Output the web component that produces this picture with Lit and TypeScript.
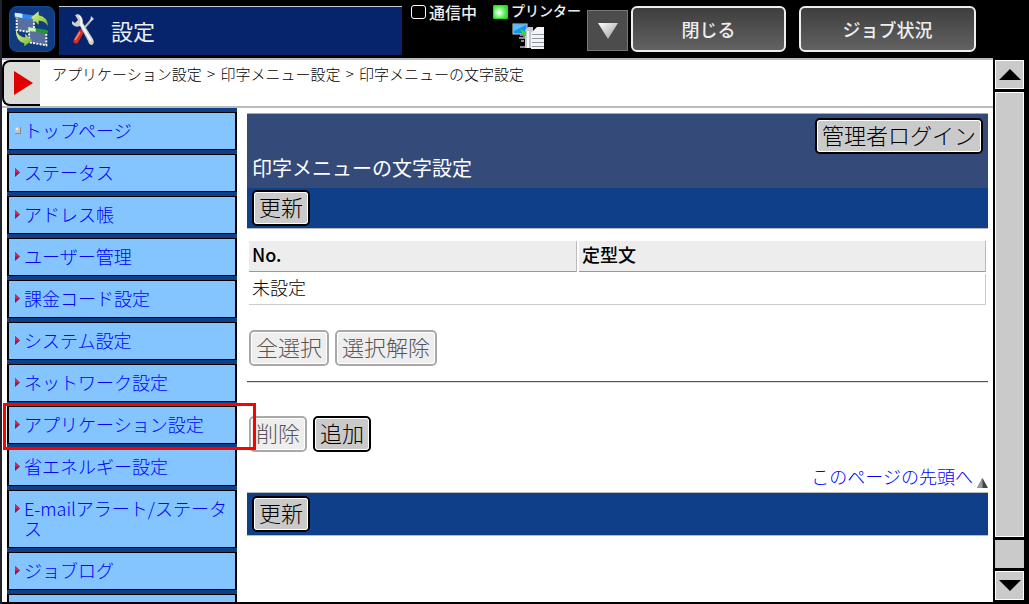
import { LitElement, html, css, svg, nothing } from "lit";
import { customElement, property } from "lit/decorators.js";

interface NavItem {
  label: string;
  top?: boolean;
  marked?: boolean;
}

const NAV: NavItem[] = [
  { label: "トップページ", top: true },
  { label: "ステータス" },
  { label: "アドレス帳" },
  { label: "ユーザー管理" },
  { label: "課金コード設定" },
  { label: "システム設定" },
  { label: "ネットワーク設定" },
  { label: "アプリケーション設定", marked: true },
  { label: "省エネルギー設定" },
  { label: "E-mailアラート/ステータス" },
  { label: "ジョブログ" },
  { label: "" },
];

@customElement("panel-header")
export class PanelHeader extends LitElement {
  static styles = css`
    :host {
      display: flex;
      height: 58px;
      box-sizing: border-box;
      padding: 6px 53px 0 7px;
      background: #000;
      color: #eee;
    }
    svg {
      display: block;
    }
    .app {
      flex: none;
      width: 46px;
      height: 46px;
      box-sizing: border-box;
      border: 1px solid #174a9a;
      border-radius: 8px;
      background: #123c80;
    }
    .title {
      flex: 0 1 344px;
      height: 49px;
      box-sizing: border-box;
      margin: 0 0 0 4px;
      padding: 0 0 2px 10px;
      display: flex;
      align-items: center;
      gap: 12px;
      border-top: 1px solid #c8ccd8;
      background: #05246c;
      font-size: 22px;
      font-weight: 400;
      line-height: 24px;
    }
    .status {
      flex: 1 0 169px;
      display: flex;
      gap: 16px;
      margin: -3px 6px 0 9px;
      font-weight: 500;
    }
    .job {
      display: flex;
      flex-direction: column;
      gap: 2px;
    }
    .line {
      display: flex;
      align-items: center;
      gap: 3px;
      height: 18px;
      font-size: 16px;
      line-height: 18px;
      white-space: nowrap;
    }
    .small {
      font-size: 14px;
      line-height: 14px;
    }
    .small span:last-child {
      padding-bottom: 4px;
    }
    .lamp {
      width: 15px;
      height: 14px;
      box-sizing: border-box;
      border: 1px solid #fff;
      border-radius: 3px;
    }
    .on {
      border-color: #2bd92b;
      border-radius: 1px;
      background: radial-gradient(circle at 40% 55%, #e8ffe0 10%, #4df04d 60%, #1fd01f);
    }
    .printer {
      margin-left: 19px;
    }
    button {
      font: inherit;
      color: inherit;
      padding: 0;
      box-sizing: border-box;
    }
    .drop {
      flex: none;
      width: 41px;
      height: 41px;
      margin: 4px 3px 0 0;
      display: grid;
      place-items: center;
      border: 1px solid #777;
      background: #4c4c4c;
    }
    .key {
      flex: 0 0 155px;
      height: 46px;
      border: 2px solid #eee;
      border-radius: 6px;
      background: linear-gradient(#3e3e3e, #626262);
      font-size: 18px;
      font-weight: 500;
      line-height: 24px;
    }
    .wide {
      flex-basis: 177px;
      margin-left: 13px;
    }
  `;

  render() {
    return html`
      <svg class="app" viewBox="0 0 46 46" aria-hidden="true">
        <defs>
          <linearGradient id="leaf" x1="0" y1="0" x2="1" y2="1">
            <stop offset="0" stop-color="#e3f79a" />
            <stop offset="1" stop-color="#6db52e" />
          </linearGradient>
        </defs>
        <path d="M7 8 L25 11 V27 L7 24Z" fill="#5a6f9f" stroke="#fff" stroke-width="2" stroke-dasharray="2 1.4" />
        <path d="M5 6 L26 9 V14 L5 11Z" fill="#2d86ec" />
        <path d="M5 6 L13 7 V11.500 L5 10Z" fill="#d5e9ff" />
        <path d="M20 23 L38 26 V40 L20 37Z" fill="#5a6f9f" stroke="#fff" stroke-width="2" stroke-dasharray="2 1.4" />
        <path d="M19 21 L39 24 V28 L19 25Z" fill="#27952d" />
        <path d="M19 21 L27 22.500 V26 L19 25Z" fill="#c8f0bc" />
        <path d="M22 11 L30 4.500 V8.500 Q39 10 40 20 Q36 14.500 30 14.500 V18.500Z" fill="url(#leaf)" />
        <path d="M6 23 Q9 32 16 32 V28 L23 35 L15 41 V38 Q6 36 6 23Z" fill="url(#leaf)" />
      </svg>
      <h1 class="title">
        <svg width="30" height="34" viewBox="0 0 30 34" aria-hidden="true">
          <path d="M23 6 L11 20" stroke="#b9bec4" stroke-width="2" />
          <path d="M22 3 L25 6 L21 9Z" fill="#d4d8dc" />
          <path d="M12 19 L7 28" stroke="#d22f22" stroke-width="5" stroke-linecap="round" />
          <path d="M11 19 L6 27" stroke="#f48a78" stroke-width="1.500" />
          <path d="M6 2 L9 1 Q14 3 14 10 L24 26 Q26 30 23 32 Q20 32 19 28 L11 13 Q6 15 3 11 L3 8 L6 10 L9 7Z" fill="#cfcfcf" />
          <path d="M10 3 Q13 5 12 11 L22 28" fill="none" stroke="#fff" stroke-width="1.500" />
        </svg>
        設定
      </h1>
      <div class="status" role="status">
        <div class="line"><span class="lamp"></span><span>通信中</span></div>
        <div class="job">
          <div class="line small"><span class="lamp on"></span><span>プリンター</span></div>
          <svg class="printer" width="34" height="27" viewBox="0 0 34 27" aria-hidden="true">
            <rect x="1" y="1" width="14" height="10" fill="#1593ea" stroke="#b9cfdf" />
            <path d="M2 2 H14 L2 8Z" fill="#5bbcf8" />
            <path d="M8 12 H12 V15 H7 M12 18 H9 M13 24 H8" stroke="#888" fill="none" stroke-width="2" />
            <path d="M13 25 V7 L16 4 H21 V25Z" fill="#c3c9ce" />
            <path d="M15 25 V8 H17 V25Z" fill="#f4f6f7" />
            <path d="M19 26 V10 L25 4 H32 V26Z" fill="#f2f4f5" />
            <path d="M20 11.500 H32 M20 15.500 H32 M20 19.500 H32 M20 23.500 H32" stroke="#8d969c" />
            <path d="M9 7 L13 11 V8" stroke="#2ee02e" fill="none" stroke-width="2" />
          </svg>
        </div>
      </div>
      <button class="drop" aria-label="表示切替">
        <svg width="20" height="16" viewBox="0 0 20 16">
          <defs>
            <linearGradient id="tri" x1="0" y1="0" x2="1" y2="1">
              <stop offset="0" stop-color="#fff" />
              <stop offset="1" stop-color="#999" />
            </linearGradient>
          </defs>
          <path d="M0 0 H20 L10 16Z" fill="url(#tri)" />
        </svg>
      </button>
      <button class="key">閉じる</button>
      <button class="key wide">ジョブ状況</button>
    `;
  }
}

@customElement("side-nav")
export class SideNav extends LitElement {
  @property({ attribute: false }) items: NavItem[] = [];

  static styles = css`
    :host {
      display: block;
      background: #103f8a;
    }
    ul {
      list-style: none;
      margin: 0;
      padding: 4px 0 0;
      display: flex;
      flex-direction: column;
      gap: 4px;
    }
    li {
      position: relative;
      min-height: 38px;
      box-sizing: border-box;
      border: 1px solid #000;
      border-width: 1px 2px;
      background: #84c5ff;
    }
    a {
      display: flex;
      gap: 3px;
      padding: 7px 6px 9px;
      color: #00f;
      font-size: 18px;
      line-height: 20px;
      text-decoration: none;
      word-break: break-all;
    }
    svg {
      flex: none;
      width: 6px;
      height: 20px;
    }
    .mark {
      position: absolute;
      inset: -4px -21px -7px -6px;
      border: 3px solid #f00;
      z-index: 2;
      pointer-events: none;
    }
  `;

  render() {
    return html`<nav>
      <ul>
        ${this.items.map(
          (item) => html`<li>
            ${item.label
              ? html`<a href="#">
                  <svg viewBox="0 0 6 20" aria-hidden="true">
                    ${item.top
                      ? svg`<path d="M0 7H6V14H0Z" fill="#8a8a8a"/><path d="M0 7H5V13H0Z" fill="#c9c4bc"/><path d="M1 8H3V10H1Z" fill="#eee"/>`
                      : svg`<path d="M0 6L5 10.500L0 15Z" fill="#8c1c4c"/><path d="M0 6L5 10.500H0Z" fill="#e8204c"/>`}
                  </svg>
                  <span>${item.label}</span>
                </a>`
              : nothing}
            ${item.marked ? html`<div class="mark"></div>` : nothing}
          </li>`
        )}
      </ul>
    </nav>`;
  }
}

@customElement("scroll-rail")
export class ScrollRail extends LitElement {
  static styles = css`
    :host {
      display: flex;
      flex-direction: column;
      gap: 3px;
      padding: 2px 5px 4px 2px;
      background: #000;
    }
    button,
    .track,
    .thumb {
      box-sizing: border-box;
      padding: 0;
      border: 1px solid #fff;
      background: #cacaca;
    }
    button {
      flex: none;
      height: 29px;
      display: grid;
      place-items: center;
    }
    .track {
      flex: 1;
    }
    .thumb {
      flex: none;
      height: 28px;
      border: 0;
    }
  `;

  render() {
    return html`
      <button aria-label="上へ">
        <svg width="22" height="11" viewBox="0 0 22 11"><path d="M0 11L11 0L22 11Z" /></svg>
      </button>
      <div class="track"></div>
      <div class="thumb"></div>
      <button aria-label="下へ">
        <svg width="22" height="11" viewBox="0 0 22 11"><path d="M0 0L11 11L22 0Z" /></svg>
      </button>
    `;
  }
}

@customElement("app-root")
export class AppRoot extends LitElement {
  static styles = css`
    :host {
      display: flex;
      flex-direction: column;
      height: 100vh;
      box-sizing: border-box;
      overflow: hidden;
      border-left: 2px solid #20202e;
      background: #000;
      color: #000;
      font-family: "Noto Sans CJK JP", sans-serif;
      font-weight: 300;
    }
    .body {
      flex: 1;
      min-height: 0;
      display: grid;
      grid-template-columns: 1fr 36px;
    }
    .page {
      min-height: 0;
      display: flex;
      flex-direction: column;
      margin-bottom: 2px;
      overflow: hidden;
      background: #fff;
    }
    .crumbs {
      flex: none;
      display: flex;
      gap: 12px;
      height: 46px;
      border: 2px solid #bbb;
      border-width: 2px 0;
      font-size: 15px;
      line-height: 28px;
    }
    .sep {
      margin: 0 2px;
    }
    .tab {
      width: 38px;
      box-sizing: border-box;
      display: grid;
      place-items: center;
      padding: 0 0 0 2px;
      border: 2px solid #000;
      border-right: 0;
      border-radius: 8px 0 0 8px;
      background: #dcdcd8;
    }
    .columns {
      flex: 1;
      min-height: 0;
      display: grid;
      grid-template-columns: 230px 1fr;
      gap: 10px;
      padding: 0 5px;
    }
    main {
      padding-top: 5px;
    }
    .head {
      display: flex;
      flex-direction: column;
      height: 75px;
      box-sizing: border-box;
      padding: 4px 5px;
      border-top: 1px solid #aaa;
      background: #344b7a;
    }
    .head button {
      align-self: flex-end;
    }
    h2 {
      margin: 0;
      color: #fff;
      font-size: 20px;
      font-weight: 400;
      line-height: 28px;
    }
    .bar {
      padding: 2px 5px;
      border-bottom: 1px solid #bbb;
      background: #103f8a;
    }
    .lower {
      padding: 3px 5px;
      border-top: 1px solid #bbb;
    }
    button.push {
      display: block;
      height: 36px;
      box-sizing: border-box;
      padding: 0 5px 4px;
      border: 2px solid #000;
      border-radius: 5px;
      outline: 1px solid #fff;
      outline-offset: -3px;
      background: #cacaca;
      color: #000;
      font: inherit;
      font-size: 22px;
      line-height: 28px;
      white-space: nowrap;
    }
    button.push:disabled {
      border-color: #a9a9a9;
      background: #eee;
      color: #555;
    }
    table {
      width: 100%;
      margin-top: 10px;
      table-layout: fixed;
      border-spacing: 2px;
      font-size: 18px;
      line-height: 24px;
      text-align: left;
    }
    th,
    td {
      padding: 1px 3px 5px;
      border-right: 1px solid #bbb;
      border-bottom: 1px solid #999;
    }
    th {
      background: #ededed;
      color: #000;
      font-weight: 500;
    }
    td {
      border-color: #ccc;
    }
    .no {
      width: 321px;
    }
    .row {
      display: flex;
      gap: 6px;
      padding: 0 2px;
      margin-top: 23px;
    }
    hr {
      margin: 15px 0 0;
      border: 0;
      border-top: 1px solid #555;
      border-bottom: 1px solid #ddd;
    }
    .second {
      margin-top: 33px;
    }
    .totop {
      display: flex;
      justify-content: flex-end;
      align-items: flex-end;
      gap: 4px;
      margin: 12px 0 4px;
      color: #00f;
      font-size: 18px;
      line-height: 24px;
      text-decoration: none;
    }
  `;

  render() {
    return html`
      <panel-header></panel-header>
      <div class="body">
        <div class="page">
          <div class="crumbs">
            <button class="tab" aria-label="開く">
              <svg width="19" height="24" viewBox="0 0 19 24">
                <path d="M0 0L19 12L0 24Z" fill="#e00000" />
              </svg>
            </button>
            <div>
              アプリケーション設定 <span class="sep">&gt;</span> 印字メニュー設定
              <span class="sep">&gt;</span> 印字メニューの文字設定
            </div>
          </div>
          <div class="columns">
            <side-nav .items=${NAV}></side-nav>
            <main>
              <div class="head">
                <button class="push">管理者ログイン</button>
                <h2>印字メニューの文字設定</h2>
              </div>
              <div class="bar"><button class="push">更新</button></div>
              <table>
                <thead>
                  <tr>
                    <th class="no">No.</th>
                    <th>定型文</th>
                  </tr>
                </thead>
                <tbody>
                  <tr>
                    <td colspan="2">未設定</td>
                  </tr>
                </tbody>
              </table>
              <div class="row">
                <button class="push" disabled>全選択</button>
                <button class="push" disabled>選択解除</button>
              </div>
              <hr />
              <div class="row second">
                <button class="push" disabled>削除</button>
                <button class="push">追加</button>
              </div>
              <a class="totop" href="#"
                >このページの先頭へ<svg width="11" height="10" viewBox="0 0 11 10" aria-hidden="true">
                  <path d="M0 10L5.500 0L11 10Z" fill="#444" />
                  <path d="M0 10L5.500 0V10Z" fill="#999" /></svg
              ></a>
              <div class="bar lower"><button class="push">更新</button></div>
            </main>
          </div>
        </div>
        <scroll-rail></scroll-rail>
      </div>
    `;
  }
}
